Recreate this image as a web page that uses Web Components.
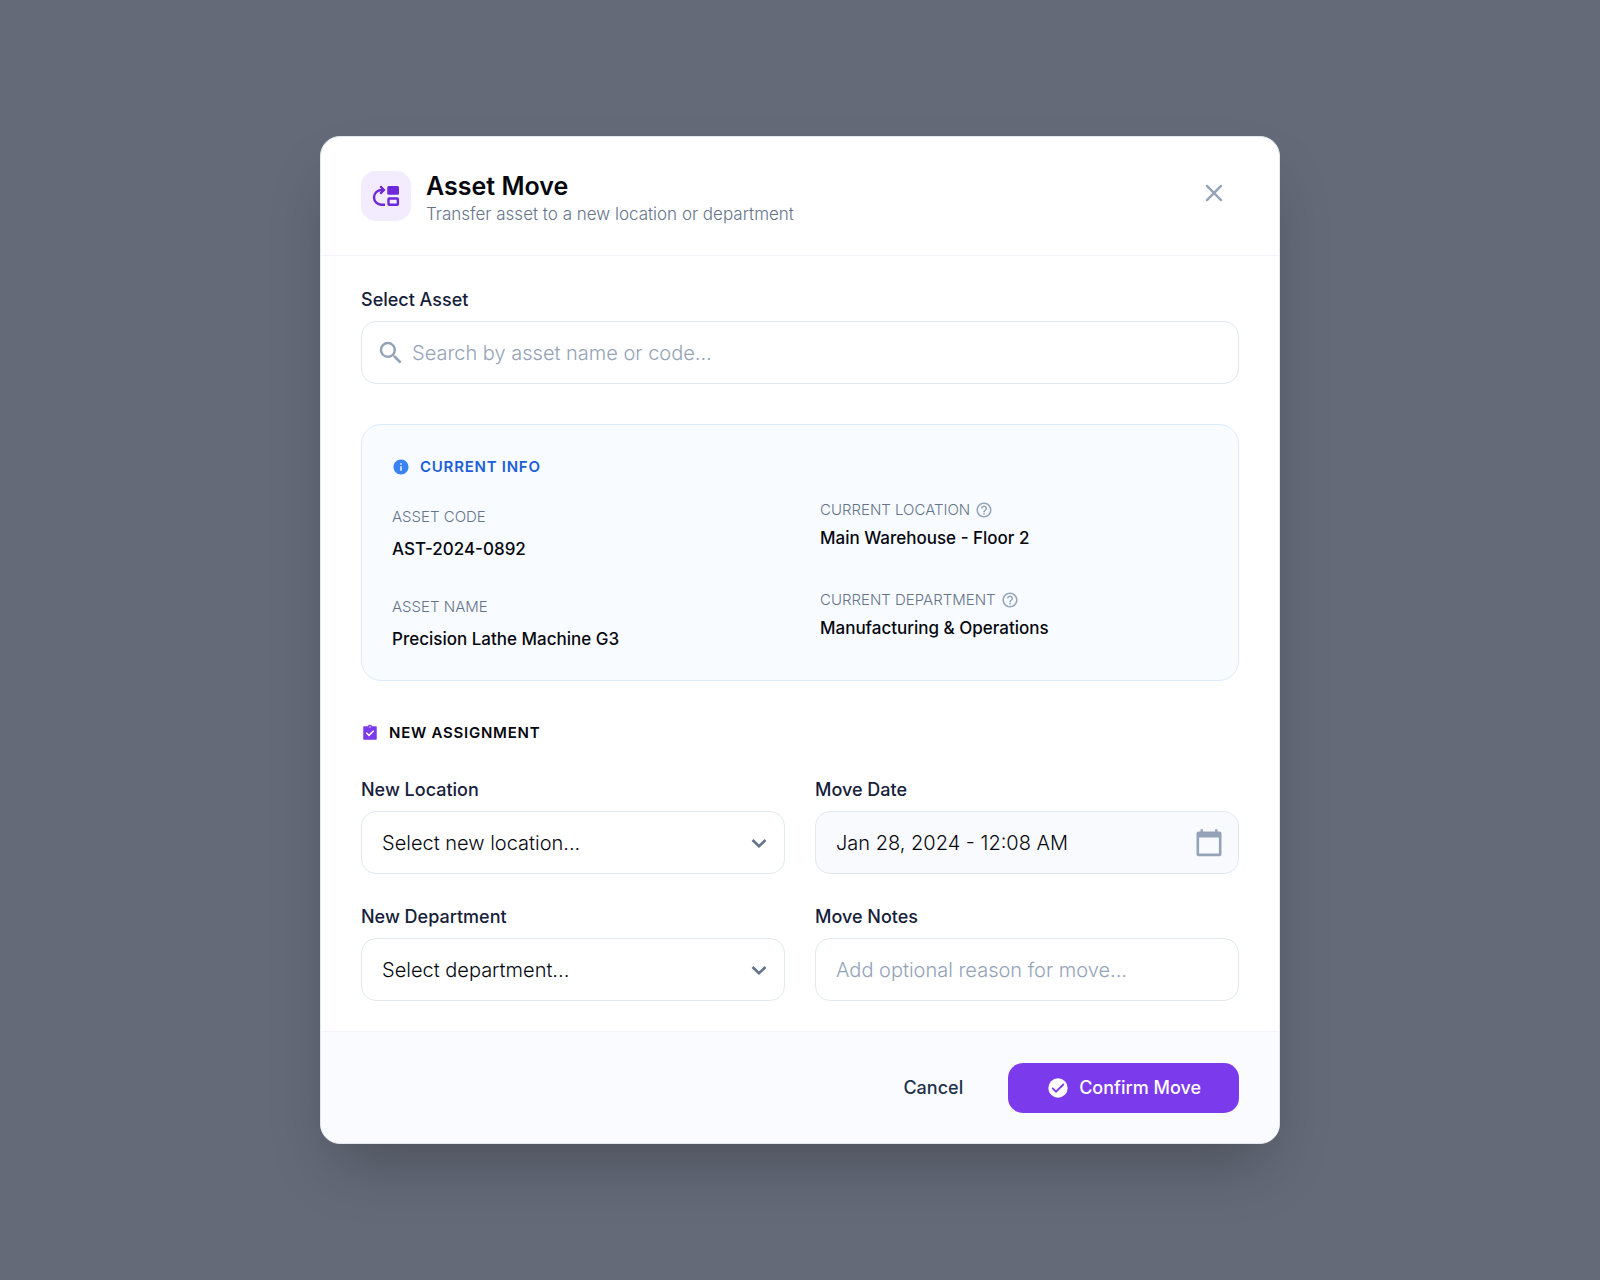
<!DOCTYPE html>
<html lang="en">
<head>
<meta charset="utf-8">
<title>Asset Move</title>
<meta name="viewport" content="width=device-width, initial-scale=1">
<style>
  *, *::before, *::after { box-sizing: border-box; }
  body {
    margin: 0;
    min-height: 100vh;
    display: flex;
    align-items: center;
    justify-content: center;
    padding: 24px;
    background: #646a78;
    font-family: Inter, "Open Sans", sans-serif;
    --ink: #05070f;
    --label: #16203a;
    --muted: #64748b;
    --faint: #94a3b8;
    --line: #e2e8f0;
    --accent: #7c3aed;
    --text-xs: 15px;
    --text-sm: 17px;
    --text-md: 18px;
    --text-lg: 20px;
  }
</style>
</head>
<body>
<modal-dialog heading="Asset Move" subheading="Transfer asset to a new location or department">
  <app-icon slot="icon" name="move" size="30"></app-icon>
  <form-field label="Select Asset" kind="search" placeholder="Search by asset name or code..."></form-field>
  <info-card heading="CURRENT INFO">
    <info-item label="ASSET CODE">AST-2024-0892</info-item>
    <info-item label="CURRENT LOCATION" help>Main Warehouse - Floor 2</info-item>
    <info-item label="ASSET NAME">Precision Lathe Machine G3</info-item>
    <info-item label="CURRENT DEPARTMENT" help>Manufacturing &amp; Operations</info-item>
  </info-card>
  <form-section heading="NEW ASSIGNMENT">
    <form-field label="New Location" kind="select" placeholder="Select new location..."></form-field>
    <form-field label="Move Date" kind="date" value="Jan 28, 2024 - 12:08 AM"></form-field>
    <form-field label="New Department" kind="select" placeholder="Select department..."></form-field>
    <form-field label="Move Notes" kind="text" placeholder="Add optional reason for move..."></form-field>
  </form-section>
  <action-button slot="actions" variant="plain">Cancel</action-button>
  <action-button slot="actions" variant="primary" icon="check">Confirm Move</action-button>
</modal-dialog>

<script>
const RESET = '*, *::before, *::after { box-sizing: border-box; } h2, h3, p, dl, dt, dd { margin: 0; font-weight: inherit; }';

const ICONS = {
  move: ['0 0 24 24', '<g fill="none" stroke="currentColor" stroke-width="1.9"><path d="M11.200 19H8.400A5.900 5.900 0 0 1 8.200 7.200h1.800"/><path d="M7.400 4.200 10.300 7.200 7.400 10.200"/><rect x="14" y="14" width="7.500" height="5" rx="0.600"/></g><rect x="13" y="4" width="9.400" height="7" rx="1.200" fill="currentColor"/>'],
  close: ['0 0 24 24', '<path d="M5.500 5.500l13 13M18.500 5.500l-13 13" fill="none" stroke="currentColor" stroke-width="2.200" stroke-linecap="round"/>'],
  search: ['0 0 24 24', '<path fill="currentColor" d="M15.5 14h-.79l-.28-.27A6.471 6.471 0 0 0 16 9.5 6.5 6.5 0 1 0 9.5 16c1.61 0 3.09-.59 4.23-1.57l.27.28v.79l5 4.99L20.49 19l-4.99-5zm-6 0C7.01 14 5 11.99 5 9.5S7.01 5 9.5 5 14 7.01 14 9.5 11.99 14 9.5 14z"/>'],
  info: ['0 0 24 24', '<path fill="currentColor" d="M12 2C6.48 2 2 6.48 2 12s4.48 10 10 10 10-4.48 10-10S17.52 2 12 2zm1 15h-2v-6h2v6zm0-8h-2V7h2v2z"/>'],
  help: ['0 0 24 24', '<path fill="currentColor" d="M11 18h2v-2h-2v2zm1-16C6.48 2 2 6.48 2 12s4.48 10 10 10 10-4.48 10-10S17.52 2 12 2zm0 18c-4.41 0-8-3.59-8-8s3.59-8 8-8 8 3.59 8 8-3.59 8-8 8zm0-14c-2.21 0-4 1.79-4 4h2c0-1.1.9-2 2-2s2 .9 2 2c0 2-3 1.75-3 5h2c0-2.25 3-2.5 3-5 0-2.21-1.79-4-4-4z"/>'],
  assignment: ['0 0 24 24', '<path fill="currentColor" fill-rule="evenodd" d="M4 3h5.200a3 3 0 0 1 5.600 0H20a1 1 0 0 1 1 1v16a1 1 0 0 1-1 1H4a1 1 0 0 1-1-1V4a1 1 0 0 1 1-1zM12 3a1 1 0 1 0 0 2 1 1 0 0 0 0-2zM10.600 16.600l7-7-1.400-1.400-5.600 5.600-2.800-2.800L6.400 12.400z"/>'],
  check: ['0 0 24 24', '<circle cx="12" cy="12" r="9.700" fill="currentColor"/><path d="M6.200 11.900l3.800 3.800 7.800-7.700" fill="none" stroke="var(--accent)" stroke-width="1.800"/>'],
  chevron: ['0 0 24 24', '<path d="M5.500 9l6.500 6.300L18.500 9" fill="none" stroke="currentColor" stroke-width="2.600"/>'],
  calendar: ['0 0 30 30', '<path fill="currentColor" fill-rule="evenodd" d="M6.500 1.200h2.400v2.300h12.200V1.200h2.400v2.300h2q2 0 2 2v20.700q0 2-2 2h-21q-2 0-2-2V5.500q0-2 2-2h2zM5.100 9.500v16h19.800v-16z"/>']
};

class AppIcon extends HTMLElement {
  constructor() { super(); this.attachShadow({ mode: 'open' }); }
  connectedCallback() {
    const [box, shapes] = ICONS[this.getAttribute('name')];
    const size = this.getAttribute('size') || 24;
    this.shadowRoot.innerHTML = `<style>:host{display:inline-flex;flex:none}svg{display:block}</style>
      <svg viewBox="${box}" width="${size}" height="${size}" aria-hidden="true">${shapes}</svg>`;
  }
}
customElements.define('app-icon', AppIcon);

class ModalDialog extends HTMLElement {
  constructor() { super(); this.attachShadow({ mode: 'open' }); }
  connectedCallback() {
    this.shadowRoot.innerHTML = `<style>${RESET}
      :host { display: block; width: 100%; max-width: 960px; background: #fff; border: 1px solid var(--line);
        border-radius: 20px; overflow: hidden; box-shadow: 0 31px 62px -15px rgba(0,0,0,.25); }
      header { display: flex; align-items: flex-start; justify-content: space-between; padding: 34px 40px 28px;
        border-bottom: 1px solid #f1f5f9; }
      .brand { display: flex; align-items: flex-start; gap: 15px; }
      .badge { display: flex; align-items: center; justify-content: center; width: 50px; height: 50px;
        border-radius: 15px; background: #f3ebfe; color: #6d28d9; }
      h2 { font-size: 25px; line-height: 30px; font-weight: 600; color: var(--ink); }
      p { font-size: var(--text-sm); line-height: 26px; font-weight: 300; color: var(--muted); }
      .close { display: flex; padding: 9px 12px; border: 0; background: none; color: var(--faint); cursor: pointer; }
      main { display: flex; flex-direction: column; gap: 40px; padding: 32px 40px 30px; }
      footer { display: flex; justify-content: flex-end; gap: 15px; padding: 31px 40px 30px;
        border-top: 1px solid #f1f5f9; background: #fafbfe; }
    </style>
    <header>
      <div class="brand">
        <div class="badge"><slot name="icon"></slot></div>
        <div><h2>${this.getAttribute('heading')}</h2><p>${this.getAttribute('subheading')}</p></div>
      </div>
      <button class="close" type="button" aria-label="Close"><app-icon name="close" size="26"></app-icon></button>
    </header>
    <main><slot></slot></main>
    <footer><slot name="actions"></slot></footer>`;
  }
}
customElements.define('modal-dialog', ModalDialog);

class FormField extends HTMLElement {
  constructor() { super(); this.attachShadow({ mode: 'open' }); }
  connectedCallback() {
    const kind = this.getAttribute('kind');
    const hint = this.getAttribute('placeholder') || '';
    const value = this.getAttribute('value') || '';
    const control = {
      search: `<app-icon name="search" size="30"></app-icon><input id="control" type="text" placeholder="${hint}">`,
      text: `<input id="control" type="text" placeholder="${hint}">`,
      date: `<input id="control" type="text" value="${value}" readonly><app-icon name="calendar" size="30"></app-icon>`,
      select: `<select id="control"><option>${hint}</option></select><app-icon name="chevron" size="24"></app-icon>`
    }[kind];
    this.shadowRoot.innerHTML = `<style>${RESET}
      :host { display: flex; flex-direction: column; gap: 9px; min-width: 0; }
      label { font-size: var(--text-md); line-height: 24px; font-weight: 500; color: var(--label); }
      .box { display: grid; grid-template-columns: 1fr; align-items: center; height: 63px; border: 1px solid var(--line);
        border-radius: 15px; background: #fff; color: var(--faint); }
      .box.date { background: #f9fafd; }
      .box > * { grid-area: 1 / 1; }
      input, select { width: 100%; height: 100%; margin: 0; padding: 0 20px; border: 0; border-radius: 14px; outline: 0;
        appearance: none; background: none; font: 300 var(--text-lg)/30px Inter, "Open Sans", sans-serif; color: var(--ink); }
      input::placeholder { color: var(--faint); opacity: 1; }
      app-icon { pointer-events: none; }
      .search input { padding-left: 50px; }
      .search app-icon { justify-self: start; margin-left: 14px; }
      .select app-icon { justify-self: end; margin-right: 13px; color: #64748b; }
      .date app-icon { justify-self: end; margin-right: 14px; }
    </style>
    <label for="control">${this.getAttribute('label')}</label>
    <div class="box ${kind}">${control}</div>`;
  }
}
customElements.define('form-field', FormField);

class InfoCard extends HTMLElement {
  constructor() { super(); this.attachShadow({ mode: 'open' }); }
  connectedCallback() {
    this.shadowRoot.innerHTML = `<style>${RESET}
      :host { display: block; padding: 31px 30px 29px; border: 1px solid #dbeafe; border-radius: 20px; background: #f8fbff; }
      h3 { display: flex; align-items: center; gap: 10px; margin-bottom: 22px; font-size: var(--text-xs); line-height: 22px;
        font-weight: 600; letter-spacing: .05em; color: #1d5fd8; }
      app-icon { color: #3b82f6; }
      .grid { display: grid; grid-template-columns: 1fr 1fr; gap: 29px 40px; }
    </style>
    <h3><app-icon name="info" size="18"></app-icon>${this.getAttribute('heading')}</h3>
    <div class="grid"><slot></slot></div>`;
  }
}
customElements.define('info-card', InfoCard);

class InfoItem extends HTMLElement {
  constructor() { super(); this.attachShadow({ mode: 'open' }); }
  connectedCallback() {
    const help = this.hasAttribute('help');
    this.shadowRoot.innerHTML = `<style>${RESET}
      :host { display: block; }
      dt { display: flex; align-items: center; gap: 5px; margin-bottom: 3px; font-size: var(--text-xs); line-height: 34px;
        font-weight: 300; color: var(--muted); }
      :host([help]) dt { margin-bottom: 6px; line-height: 20px; }
      dd { font-size: var(--text-sm); line-height: 24px; font-weight: 500; color: var(--ink); }
      app-icon { color: var(--faint); }
    </style>
    <dl><dt>${this.getAttribute('label')}${help ? '<app-icon name="help" size="18"></app-icon>' : ''}</dt><dd><slot></slot></dd></dl>`;
  }
}
customElements.define('info-item', InfoItem);

class FormSection extends HTMLElement {
  constructor() { super(); this.attachShadow({ mode: 'open' }); }
  connectedCallback() {
    this.shadowRoot.innerHTML = `<style>${RESET}
      :host { display: block; }
      h3 { display: flex; align-items: center; gap: 10px; margin-bottom: 33px; font-size: var(--text-xs); line-height: 24px;
        font-weight: 600; letter-spacing: .05em; color: var(--ink); }
      app-icon { color: var(--accent); }
      .grid { display: grid; grid-template-columns: 1fr 1fr; gap: 31px 30px; }
    </style>
    <h3><app-icon name="assignment" size="18"></app-icon>${this.getAttribute('heading')}</h3>
    <div class="grid"><slot></slot></div>`;
  }
}
customElements.define('form-section', FormSection);

class ActionButton extends HTMLElement {
  constructor() { super(); this.attachShadow({ mode: 'open' }); }
  connectedCallback() {
    const icon = this.getAttribute('icon');
    this.shadowRoot.innerHTML = `<style>${RESET}
      :host { display: block; }
      button { display: flex; align-items: center; gap: 9px; height: 50px; padding: 0 30px; border: 0; border-radius: 15px;
        background: none; font: 500 var(--text-md)/24px Inter, "Open Sans", sans-serif; color: #1e3248; cursor: pointer; }
      :host([variant=primary]) button { padding: 0 38px; background: var(--accent); color: #fff; }
    </style>
    <button type="button">${icon ? `<app-icon name="${icon}" size="24"></app-icon>` : ''}<span><slot></slot></span></button>`;
  }
}
customElements.define('action-button', ActionButton);
</script>
</body>
</html>
